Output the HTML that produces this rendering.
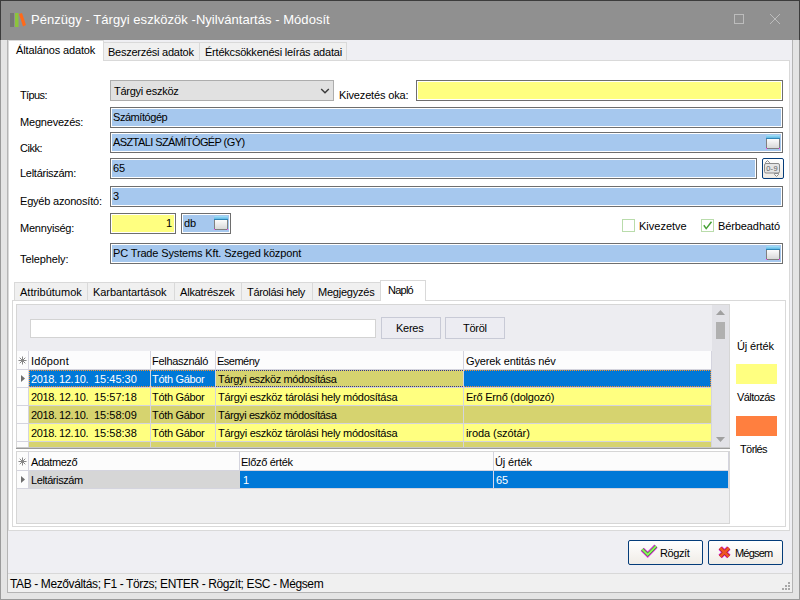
<!DOCTYPE html><html><head><meta charset="utf-8"><style>
html,body{margin:0;padding:0;width:800px;height:600px;overflow:hidden;background:#fff}
body{position:relative;font-family:"Liberation Sans",sans-serif}
body div{position:absolute}
.t{white-space:pre;line-height:13px}
</style></head><body>
<div style="left:0px;top:0px;width:800px;height:600px;background:#9a9a9a"></div>
<div style="left:1px;top:40px;width:798px;height:559px;background:#e4e4e4"></div>
<div style="left:7px;top:40px;width:786px;height:553px;background:#b4b4b4"></div>
<div style="left:8px;top:40px;width:784px;height:552px;background:#efeff3"></div>
<div style="left:0px;top:0px;width:800px;height:40px;background:#3c3c3c"></div>
<div style="left:1px;top:1px;width:798px;height:39px;background:#909090"></div>
<svg style="position:absolute;left:0;top:0" width="40" height="40"><rect x="10" y="13" width="4" height="14" fill="#767676"/><rect x="15" y="13" width="3.5" height="14" fill="#8cc43c"/><polygon points="19,14 22,13 26,25 23,26.5" fill="#ff6a1a"/></svg>
<div class="t" style="left:31px;top:13px;font-size:13px;color:#fff;letter-spacing:0.041px;">Pénzügy - Tárgyi eszközök -Nyilvántartás - Módosít</div>
<svg style="position:absolute;left:0;top:0" width="800" height="40"><rect x="734.5" y="14.5" width="9" height="9" fill="none" stroke="#bcbcbc" stroke-width="1"/><path d="M770 14 L780 24 M780 14 L770 24" stroke="#bcbcbc" stroke-width="1"/></svg>
<div style="left:8px;top:60px;width:782px;height:471px;box-sizing:border-box;border:1px solid #d9d9d9;background:#fff;"></div>
<div style="left:8px;top:40px;width:96px;height:21px;box-sizing:border-box;border:1px solid #d9d9d9;background:#fff;"></div>
<div style="left:9px;top:60px;width:94px;height:1px;background:#fff"></div>
<div class="t" style="left:16px;top:44px;font-size:11px;color:#000;letter-spacing:-0.133px;">Általános adatok</div>
<div style="left:103px;top:42px;width:97px;height:19px;box-sizing:border-box;border:1px solid #d9d9d9;background:#f0f0f0;"></div>
<div class="t" style="left:108px;top:46px;font-size:11px;color:#000;letter-spacing:-0.25px;">Beszerzési adatok</div>
<div style="left:199px;top:42px;width:148px;height:19px;box-sizing:border-box;border:1px solid #d9d9d9;background:#f0f0f0;"></div>
<div class="t" style="left:205px;top:46px;font-size:11px;color:#000;letter-spacing:-0.214px;">Értékcsökkenési leírás adatai</div>
<div class="t" style="left:20px;top:89px;font-size:11px;color:#000;letter-spacing:-0.6px;">Típus:</div>
<div class="t" style="left:20px;top:116px;font-size:11px;color:#000;letter-spacing:-0.2px;">Megnevezés:</div>
<div class="t" style="left:20px;top:142px;font-size:11px;color:#000;letter-spacing:-0.5px;">Cikk:</div>
<div class="t" style="left:20px;top:167px;font-size:11px;color:#000;letter-spacing:-0.273px;">Leltáriszám:</div>
<div class="t" style="left:20px;top:195px;font-size:11px;color:#000;letter-spacing:-0.2px;">Egyéb azonosító:</div>
<div class="t" style="left:20px;top:222px;font-size:11px;color:#000;letter-spacing:-0.222px;">Mennyiség:</div>
<div class="t" style="left:20px;top:253px;font-size:11px;color:#000;letter-spacing:-0.111px;">Telephely:</div>
<div style="left:110px;top:80px;width:224px;height:21px;box-sizing:border-box;border:1px solid #adadad;background:#e1e1e1;"></div>
<div class="t" style="left:114px;top:85px;font-size:11px;color:#000;letter-spacing:-0.25px;">Tárgyi eszköz</div>
<svg style="position:absolute;left:318px;top:84px" width="14" height="14"><path d="M3.2 5 L7 8.8 L10.8 5" fill="none" stroke="#3a3a3a" stroke-width="1.4"/></svg>
<div class="t" style="left:339px;top:89px;font-size:11px;color:#000;letter-spacing:-0.154px;">Kivezetés oka:</div>
<div style="left:416px;top:80px;width:367px;height:21px;box-sizing:border-box;border:1px solid #6e6e6e;background:#fff;"></div>
<div style="left:418px;top:82px;width:363px;height:17px;background:#ffff80"></div>
<div style="left:110px;top:107px;width:673px;height:21px;box-sizing:border-box;border:1px solid #6e6e6e;background:#fff;"></div>
<div style="left:112px;top:109px;width:669px;height:17px;background:#a6c8ee"></div>
<div class="t" style="left:113px;top:111px;font-size:11px;color:#000;letter-spacing:-0.444px;">Számítógép</div>
<div style="left:110px;top:132px;width:673px;height:21px;box-sizing:border-box;border:1px solid #6e6e6e;background:#fff;"></div>
<div style="left:112px;top:134px;width:669px;height:17px;background:#a6c8ee"></div>
<div class="t" style="left:113px;top:136px;font-size:11px;color:#000;letter-spacing:-0.591px;">ASZTALI SZÁMÍTÓGÉP (GY)</div>
<div style="left:110px;top:158px;width:647px;height:21px;box-sizing:border-box;border:1px solid #6e6e6e;background:#fff;"></div>
<div style="left:112px;top:160px;width:643px;height:17px;background:#a6c8ee"></div>
<div class="t" style="left:113px;top:162px;font-size:11px;color:#000;">65</div>
<div style="left:110px;top:186px;width:673px;height:21px;box-sizing:border-box;border:1px solid #6e6e6e;background:#fff;"></div>
<div style="left:112px;top:188px;width:669px;height:17px;background:#a6c8ee"></div>
<div class="t" style="left:113px;top:190px;font-size:11px;color:#000;">3</div>
<div style="left:110px;top:213px;width:66px;height:21px;box-sizing:border-box;border:1px solid #6e6e6e;background:#fff;"></div>
<div style="left:112px;top:215px;width:62px;height:17px;background:#ffff80"></div>
<div class="t" style="left:166px;top:217px;font-size:11px;color:#000;">1</div>
<div style="left:181px;top:213px;width:50px;height:21px;box-sizing:border-box;border:1px solid #6e6e6e;background:#fff;"></div>
<div style="left:183px;top:215px;width:46px;height:17px;background:#a6c8ee"></div>
<div class="t" style="left:184px;top:217px;font-size:11px;color:#000;">db</div>
<div style="left:110px;top:243px;width:673px;height:21px;box-sizing:border-box;border:1px solid #6e6e6e;background:#fff;"></div>
<div style="left:112px;top:245px;width:669px;height:17px;background:#a6c8ee"></div>
<div class="t" style="left:113px;top:247px;font-size:11px;color:#000;letter-spacing:-0.143px;">PC Trade Systems Kft. Szeged központ</div>
<svg style="position:absolute;left:766px;top:135px" width="14" height="14"><defs><linearGradient id="wg766135" x1="0" y1="0" x2="0" y2="1"><stop offset="0" stop-color="#fefefe"/><stop offset="1" stop-color="#d6d6d6"/></linearGradient><linearGradient id="wb766135" x1="0" y1="0" x2="0" y2="1"><stop offset="0" stop-color="#a8e4fa"/><stop offset="1" stop-color="#48a8dc"/></linearGradient></defs><rect x="0.5" y="3.5" width="13" height="10" fill="url(#wg766135)" stroke="#808080"/><path d="M0 4 V1.5 Q0 0 1.5 0 H12.5 Q14 0 14 1.5 V4 Z" fill="url(#wb766135)"/><rect x="0" y="3" width="14" height="1" fill="#2f86b8"/><rect x="0" y="13" width="1" height="1" fill="#ff40ff"/><rect x="13" y="13" width="1" height="1" fill="#ff40ff"/></svg>
<svg style="position:absolute;left:214px;top:216px" width="14" height="14"><defs><linearGradient id="wg214216" x1="0" y1="0" x2="0" y2="1"><stop offset="0" stop-color="#fefefe"/><stop offset="1" stop-color="#d6d6d6"/></linearGradient><linearGradient id="wb214216" x1="0" y1="0" x2="0" y2="1"><stop offset="0" stop-color="#a8e4fa"/><stop offset="1" stop-color="#48a8dc"/></linearGradient></defs><rect x="0.5" y="3.5" width="13" height="10" fill="url(#wg214216)" stroke="#808080"/><path d="M0 4 V1.5 Q0 0 1.5 0 H12.5 Q14 0 14 1.5 V4 Z" fill="url(#wb214216)"/><rect x="0" y="3" width="14" height="1" fill="#2f86b8"/><rect x="0" y="13" width="1" height="1" fill="#ff40ff"/><rect x="13" y="13" width="1" height="1" fill="#ff40ff"/></svg>
<svg style="position:absolute;left:766px;top:246px" width="14" height="14"><defs><linearGradient id="wg766246" x1="0" y1="0" x2="0" y2="1"><stop offset="0" stop-color="#fefefe"/><stop offset="1" stop-color="#d6d6d6"/></linearGradient><linearGradient id="wb766246" x1="0" y1="0" x2="0" y2="1"><stop offset="0" stop-color="#a8e4fa"/><stop offset="1" stop-color="#48a8dc"/></linearGradient></defs><rect x="0.5" y="3.5" width="13" height="10" fill="url(#wg766246)" stroke="#808080"/><path d="M0 4 V1.5 Q0 0 1.5 0 H12.5 Q14 0 14 1.5 V4 Z" fill="url(#wb766246)"/><rect x="0" y="3" width="14" height="1" fill="#2f86b8"/><rect x="0" y="13" width="1" height="1" fill="#ff40ff"/><rect x="13" y="13" width="1" height="1" fill="#ff40ff"/></svg>
<div style="left:762px;top:158px;width:22px;height:21px;box-sizing:border-box;border:1px solid #043c7a;border-radius:2px;background:linear-gradient(#fff,#eeeae4)"></div>
<svg style="position:absolute;left:760px;top:156px" width="26" height="26"><path d="M7.5 4.5 L5.5 6.5 V7.5 H9.5 V6.5 Z" fill="#f4f4f4" stroke="#8a8a8a"/><path d="M16.5 20.5 L18.5 18.5 V17.5 H14.5 V18.5 Z" fill="#f4f4f4" stroke="#8a8a8a"/><rect x="4.5" y="7.5" width="15" height="9.5" rx="1.5" fill="#e4e4e4" stroke="#8a8a8a"/><text x="12" y="15" font-size="7.5" font-family="Liberation Sans" text-anchor="middle" fill="#606060" letter-spacing="0.3">0-9</text></svg>
<div style="left:622px;top:219px;width:13px;height:13px;box-sizing:border-box;border:1px solid #b9dcab;background:#fff;"></div>
<div class="t" style="left:639px;top:220px;font-size:11px;color:#000;">Kivezetve</div>
<div style="left:701px;top:219px;width:13px;height:13px;box-sizing:border-box;border:1px solid #b9dcab;background:#fff;"></div>
<svg style="position:absolute;left:701px;top:219px" width="13" height="13"><path d="M2.8 6.3 L5.2 9.6 L10.5 2.8" fill="none" stroke="#46a034" stroke-width="1.5"/></svg>
<div class="t" style="left:718px;top:220px;font-size:11px;color:#000;letter-spacing:-0.1px;">Bérbeadható</div>
<div style="left:12px;top:300px;width:774px;height:227px;box-sizing:border-box;border:1px solid #d9d9d9;background:#fff;"></div>
<div style="left:14px;top:282px;width:74px;height:19px;box-sizing:border-box;border:1px solid #d9d9d9;background:#f0f0f0;"></div>
<div class="t" style="left:20px;top:286px;font-size:11px;color:#000;">Attribútumok</div>
<div style="left:87px;top:282px;width:88px;height:19px;box-sizing:border-box;border:1px solid #d9d9d9;background:#f0f0f0;"></div>
<div class="t" style="left:93px;top:286px;font-size:11px;color:#000;letter-spacing:-0.077px;">Karbantartások</div>
<div style="left:174px;top:282px;width:68px;height:19px;box-sizing:border-box;border:1px solid #d9d9d9;background:#f0f0f0;"></div>
<div class="t" style="left:180px;top:286px;font-size:11px;color:#000;letter-spacing:-0.2px;">Alkatrészek</div>
<div style="left:241px;top:282px;width:72px;height:19px;box-sizing:border-box;border:1px solid #d9d9d9;background:#f0f0f0;"></div>
<div class="t" style="left:247px;top:286px;font-size:11px;color:#000;letter-spacing:-0.333px;">Tárolási hely</div>
<div style="left:312px;top:282px;width:69px;height:19px;box-sizing:border-box;border:1px solid #d9d9d9;background:#f0f0f0;"></div>
<div class="t" style="left:318px;top:286px;font-size:11px;color:#000;letter-spacing:-0.222px;">Megjegyzés</div>
<div style="left:380px;top:280px;width:46px;height:21px;box-sizing:border-box;border:1px solid #d9d9d9;background:#fff;"></div>
<div style="left:381px;top:300px;width:44px;height:1px;background:#fff"></div>
<div class="t" style="left:388px;top:284px;font-size:11px;color:#000;letter-spacing:-0.75px;">Napló</div>
<div style="left:16px;top:304px;width:714px;height:220px;box-sizing:border-box;border:1px solid #d6d6d6;background:#ededf1;"></div>
<div style="left:30px;top:319px;width:346px;height:19px;box-sizing:border-box;border:1px solid #d3d3d3;background:#fff;"></div>
<div style="left:381px;top:317px;width:60px;height:22px;box-sizing:border-box;border:1px solid #c8cad6;background:#ececf2;"></div>
<div class="t" style="left:396px;top:322px;font-size:11px;color:#000;letter-spacing:-0.25px;">Keres</div>
<div style="left:445px;top:317px;width:60px;height:22px;box-sizing:border-box;border:1px solid #c8cad6;background:#ececf2;"></div>
<div class="t" style="left:463px;top:322px;font-size:11px;color:#000;letter-spacing:-0.25px;">Töröl</div>
<div style="left:712px;top:305px;width:17px;height:143px;background:#e2e2e7"></div>
<svg style="position:absolute;left:712px;top:305px" width="17" height="142"><path d="M4 10 L8.5 5 L13 10 Z" fill="#a0a0a0"/><rect x="4" y="17" width="9" height="17" fill="#b0b0b0"/><path d="M4 132 L8.5 137 L13 132 Z" fill="#a0a0a0"/></svg>
<div style="left:17px;top:351px;width:694px;height:97px;background:#fff"></div>
<div style="left:17px;top:351px;width:694px;height:18px;background:#fcfcfd"></div>
<div class="t" style="left:31px;top:355px;font-size:11px;color:#000;letter-spacing:0.167px;">Időpont</div>
<div class="t" style="left:152px;top:355px;font-size:11px;color:#000;letter-spacing:-0.3px;">Felhasználó</div>
<div class="t" style="left:217px;top:355px;font-size:11px;color:#000;letter-spacing:-0.5px;">Esemény</div>
<div class="t" style="left:466px;top:355px;font-size:11px;color:#000;letter-spacing:-0.118px;">Gyerek entitás név</div>
<svg style="position:absolute;left:18px;top:356px" width="9" height="9"><g stroke="#858585" stroke-width="1"><path d="M4.5 0.5 V8.5 M0.5 4.5 H8.5 M1.7 1.7 L7.3 7.3 M7.3 1.7 L1.7 7.3"/></g></svg>
<div style="left:17px;top:370px;width:11px;height:17px;background:#fcfcfc"></div>
<div style="left:29px;top:370px;width:682px;height:17px;background:#0078d7"></div>
<div style="left:216px;top:370px;width:247px;height:17px;background:#d6d36f"></div>
<div class="t" style="left:31px;top:373px;font-size:11px;color:#fff;letter-spacing:-0.35px;">2018.</div>
<div class="t" style="left:59px;top:373px;font-size:11px;color:#fff;letter-spacing:-0.35px;">12.</div>
<div class="t" style="left:74px;top:373px;font-size:11px;color:#fff;letter-spacing:-0.35px;">10.</div>
<div class="t" style="left:94px;top:373px;font-size:11px;color:#fff;">15:45:30</div>
<div class="t" style="left:152px;top:373px;font-size:11px;color:#fff;letter-spacing:-0.333px;">Tóth Gábor</div>
<div class="t" style="left:218px;top:373px;font-size:11px;color:#000;letter-spacing:-0.391px;">Tárgyi eszköz módosítása</div>
<div style="left:17px;top:388px;width:11px;height:17px;background:#fcfcfc"></div>
<div style="left:29px;top:388px;width:682px;height:17px;background:#ffff80"></div>
<div class="t" style="left:31px;top:391px;font-size:11px;color:#000;letter-spacing:-0.35px;">2018.</div>
<div class="t" style="left:59px;top:391px;font-size:11px;color:#000;letter-spacing:-0.35px;">12.</div>
<div class="t" style="left:74px;top:391px;font-size:11px;color:#000;letter-spacing:-0.35px;">10.</div>
<div class="t" style="left:94px;top:391px;font-size:11px;color:#000;">15:57:18</div>
<div class="t" style="left:152px;top:391px;font-size:11px;color:#000;letter-spacing:-0.333px;">Tóth Gábor</div>
<div class="t" style="left:218px;top:391px;font-size:11px;color:#000;letter-spacing:-0.27px;">Tárgyi eszköz tárolási hely módosítása</div>
<div class="t" style="left:466px;top:391px;font-size:11px;color:#000;letter-spacing:-0.235px;">Erő Ernő (dolgozó)</div>
<div style="left:17px;top:406px;width:11px;height:17px;background:#fcfcfc"></div>
<div style="left:29px;top:406px;width:682px;height:17px;background:#d6d36f"></div>
<div class="t" style="left:31px;top:409px;font-size:11px;color:#000;letter-spacing:-0.35px;">2018.</div>
<div class="t" style="left:59px;top:409px;font-size:11px;color:#000;letter-spacing:-0.35px;">12.</div>
<div class="t" style="left:74px;top:409px;font-size:11px;color:#000;letter-spacing:-0.35px;">10.</div>
<div class="t" style="left:94px;top:409px;font-size:11px;color:#000;">15:58:09</div>
<div class="t" style="left:152px;top:409px;font-size:11px;color:#000;letter-spacing:-0.333px;">Tóth Gábor</div>
<div class="t" style="left:218px;top:409px;font-size:11px;color:#000;letter-spacing:-0.391px;">Tárgyi eszköz módosítása</div>
<div style="left:17px;top:424px;width:11px;height:17px;background:#fcfcfc"></div>
<div style="left:29px;top:424px;width:682px;height:17px;background:#ffff80"></div>
<div class="t" style="left:31px;top:427px;font-size:11px;color:#000;letter-spacing:-0.35px;">2018.</div>
<div class="t" style="left:59px;top:427px;font-size:11px;color:#000;letter-spacing:-0.35px;">12.</div>
<div class="t" style="left:74px;top:427px;font-size:11px;color:#000;letter-spacing:-0.35px;">10.</div>
<div class="t" style="left:94px;top:427px;font-size:11px;color:#000;">15:58:38</div>
<div class="t" style="left:152px;top:427px;font-size:11px;color:#000;letter-spacing:-0.333px;">Tóth Gábor</div>
<div class="t" style="left:218px;top:427px;font-size:11px;color:#000;letter-spacing:-0.27px;">Tárgyi eszköz tárolási hely módosítása</div>
<div class="t" style="left:466px;top:427px;font-size:11px;color:#000;letter-spacing:-0.077px;">iroda (szótár)</div>
<div style="left:17px;top:442px;width:11px;height:17px;background:#fcfcfc"></div>
<div style="left:29px;top:442px;width:682px;height:17px;background:#d6d36f"></div>
<div class="t" style="left:31px;top:445px;font-size:11px;color:#000;letter-spacing:-0.35px;">2018.</div>
<div class="t" style="left:59px;top:445px;font-size:11px;color:#000;letter-spacing:-0.35px;">12.</div>
<div class="t" style="left:74px;top:445px;font-size:11px;color:#000;letter-spacing:-0.35px;">10.</div>
<div class="t" style="left:94px;top:445px;font-size:11px;color:#000;">15:59:02</div>
<div class="t" style="left:152px;top:445px;font-size:11px;color:#000;letter-spacing:-0.333px;">Tóth Gábor</div>
<div class="t" style="left:218px;top:445px;font-size:11px;color:#000;letter-spacing:-0.27px;">Tárgyi eszköz tárolási hely módosítása</div>
<div class="t" style="left:466px;top:445px;font-size:11px;color:#000;letter-spacing:0.143px;">raktár (szótár)</div>
<div style="left:17px;top:369px;width:694px;height:1px;background:#d4d4de"></div>
<div style="left:17px;top:387px;width:694px;height:1px;background:#d4d4de"></div>
<div style="left:17px;top:405px;width:694px;height:1px;background:#d4d4de"></div>
<div style="left:17px;top:423px;width:694px;height:1px;background:#d4d4de"></div>
<div style="left:17px;top:441px;width:694px;height:1px;background:#d4d4de"></div>
<div style="left:28px;top:351px;width:1px;height:97px;background:#d4d4de"></div>
<div style="left:150px;top:351px;width:1px;height:97px;background:#d4d4de"></div>
<div style="left:215px;top:351px;width:1px;height:97px;background:#d4d4de"></div>
<div style="left:463px;top:351px;width:1px;height:97px;background:#d4d4de"></div>
<div style="left:711px;top:351px;width:1px;height:97px;background:#d4d4de"></div>
<svg style="position:absolute;left:17px;top:370px" width="11" height="18"><path d="M4 5 L8 8.5 L4 12 Z" fill="#6e6e6e"/></svg>
<div style="left:29px;top:370px;width:121px;height:1px;background:repeating-linear-gradient(90deg,#f7902a 0 1px,transparent 1px 2px)"></div>
<div style="left:29px;top:386px;width:121px;height:1px;background:repeating-linear-gradient(90deg,#f7902a 0 1px,transparent 1px 2px)"></div>
<div style="left:151px;top:370px;width:64px;height:1px;background:repeating-linear-gradient(90deg,#f7902a 0 1px,transparent 1px 2px)"></div>
<div style="left:151px;top:386px;width:64px;height:1px;background:repeating-linear-gradient(90deg,#f7902a 0 1px,transparent 1px 2px)"></div>
<div style="left:464px;top:370px;width:247px;height:1px;background:repeating-linear-gradient(90deg,#f7902a 0 1px,transparent 1px 2px)"></div>
<div style="left:464px;top:386px;width:247px;height:1px;background:repeating-linear-gradient(90deg,#f7902a 0 1px,transparent 1px 2px)"></div>
<div style="left:29px;top:370px;width:1px;height:17px;background:repeating-linear-gradient(180deg,#f7902a 0 1px,transparent 1px 2px)"></div>
<div style="left:710px;top:370px;width:1px;height:17px;background:repeating-linear-gradient(180deg,#f7902a 0 1px,transparent 1px 2px)"></div>
<div style="left:216px;top:370px;width:247px;height:1px;background:repeating-linear-gradient(90deg,#303090 0 1px,transparent 1px 2px)"></div>
<div style="left:216px;top:386px;width:247px;height:1px;background:repeating-linear-gradient(90deg,#303090 0 1px,transparent 1px 2px)"></div>
<div style="left:16px;top:447px;width:714px;height:1px;background:#c8c8c8"></div>
<div style="left:16px;top:448px;width:714px;height:1px;background:#9a9a9a"></div>
<div style="left:16px;top:449px;width:714px;height:2px;background:#fff"></div>
<div style="left:16px;top:451px;width:714px;height:73px;box-sizing:border-box;border:1px solid #d6d6d6;background:#efeff0;"></div>
<div style="left:17px;top:452px;width:711px;height:18px;background:#fcfcfc"></div>
<div style="left:17px;top:470px;width:711px;height:1px;background:#d4d4de"></div>
<div style="left:17px;top:488px;width:711px;height:1px;background:#d4d4de"></div>
<div style="left:28px;top:452px;width:1px;height:18px;background:#d4d4de"></div>
<div style="left:239px;top:452px;width:1px;height:18px;background:#d4d4de"></div>
<div style="left:493px;top:452px;width:1px;height:18px;background:#d4d4de"></div>
<div style="left:28px;top:471px;width:1px;height:17px;background:#d4d4de"></div>
<div style="left:728px;top:452px;width:1px;height:37px;background:#d4d4de"></div>
<svg style="position:absolute;left:18px;top:457px" width="9" height="9"><g stroke="#858585" stroke-width="1"><path d="M4.5 0.5 V8.5 M0.5 4.5 H8.5 M1.7 1.7 L7.3 7.3 M7.3 1.7 L1.7 7.3"/></g></svg>
<div class="t" style="left:31px;top:456px;font-size:11px;color:#000;letter-spacing:-0.429px;">Adatmező</div>
<div class="t" style="left:241px;top:456px;font-size:11px;color:#000;letter-spacing:-0.3px;">Előző érték</div>
<div class="t" style="left:495px;top:456px;font-size:11px;color:#000;letter-spacing:-0.143px;">Új érték</div>
<div style="left:17px;top:471px;width:11px;height:17px;background:#fcfcfc"></div>
<div style="left:29px;top:471px;width:211px;height:17px;background:#d6d6d6"></div>
<div style="left:240px;top:471px;width:488px;height:17px;background:#0078d7"></div>
<div style="left:493px;top:471px;width:1px;height:17px;background:#d8d8ec"></div>
<svg style="position:absolute;left:17px;top:471px" width="11" height="18"><path d="M4 5 L8 8.5 L4 12 Z" fill="#6e6e6e"/></svg>
<div class="t" style="left:31px;top:474px;font-size:11px;color:#000;letter-spacing:-0.4px;">Leltáriszám</div>
<div class="t" style="left:243px;top:474px;font-size:11px;color:#fff;">1</div>
<div class="t" style="left:496px;top:474px;font-size:11px;color:#fff;">65</div>
<div class="t" style="left:737px;top:340px;font-size:11px;color:#000;letter-spacing:-0.143px;">Új érték</div>
<div style="left:736px;top:364px;width:41px;height:20px;background:#ffff80"></div>
<div class="t" style="left:737px;top:391px;font-size:11px;color:#000;letter-spacing:-0.571px;">Változás</div>
<div style="left:736px;top:416px;width:41px;height:20px;background:#ff7f3f"></div>
<div class="t" style="left:740px;top:443px;font-size:11px;color:#000;letter-spacing:-0.6px;">Törlés</div>
<div style="left:628px;top:540px;width:75px;height:25px;box-sizing:border-box;border:1px solid #043c7a;border-radius:2px;background:linear-gradient(#fff,#f0ece6)"></div>
<svg style="position:absolute;left:636px;top:542px" width="24" height="20"><path d="M6.3 7.3 L11.7 12.7 L20 4.2" fill="none" stroke="#e828e8" stroke-width="4.6"/><path d="M6.3 7.3 L11.7 12.7 L20 4.2" fill="none" stroke="#2c9a20" stroke-width="3"/><path d="M6.3 7.3 L11.7 12.7 L20 4.2" fill="none" stroke="#90f060" stroke-width="1.8"/></svg>
<div class="t" style="left:660px;top:547px;font-size:11px;color:#000;letter-spacing:-0.4px;">Rögzít</div>
<div style="left:708px;top:540px;width:75px;height:25px;box-sizing:border-box;border:1px solid #043c7a;border-radius:2px;background:linear-gradient(#fff,#f0ece6)"></div>
<svg style="position:absolute;left:714px;top:543px" width="20" height="18"><path d="M6.2 5 L14.8 13.6 M14.8 5 L6.2 13.6" fill="none" stroke="#e020e0" stroke-width="5"/><path d="M6.2 5 L14.8 13.6 M14.8 5 L6.2 13.6" fill="none" stroke="#a02810" stroke-width="3.6"/><path d="M6.2 5 L14.8 13.6 M14.8 5 L6.2 13.6" fill="none" stroke="#f05424" stroke-width="2.6"/></svg>
<div class="t" style="left:735px;top:547px;font-size:11px;color:#000;letter-spacing:-0.8px;">Mégsem</div>
<div style="left:8px;top:573px;width:784px;height:1px;background:#d8d8d8"></div>
<div style="left:8px;top:574px;width:784px;height:18px;background:#f0f0f0"></div>
<div class="t" style="left:10px;top:578px;font-size:12px;color:#000;letter-spacing:-0.386px;">TAB - Mezőváltás; F1 - Törzs; ENTER - Rögzít; ESC - Mégsem</div>
<svg style="position:absolute;left:780px;top:580px" width="12" height="12"><g fill="#a8a8a8"><rect x="8" y="2" width="2" height="2"/><rect x="5" y="5" width="2" height="2"/><rect x="8" y="5" width="2" height="2"/><rect x="2" y="8" width="2" height="2"/><rect x="5" y="8" width="2" height="2"/><rect x="8" y="8" width="2" height="2"/></g></svg>
</body></html>
